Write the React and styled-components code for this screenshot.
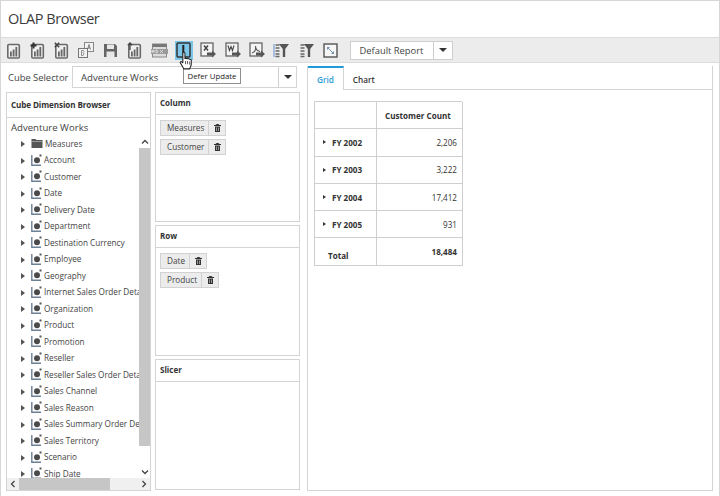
import React from 'react'
import styled, { createGlobalStyle } from 'styled-components'

const GlobalStyle = createGlobalStyle`
    html, body {
        margin: 0;
        padding: 0;
        background: white;
    }
    * {
        box-sizing: border-box;
    }
`

const Page = styled.div`
    position: relative;
    width: 720px;
    height: 496px;
    overflow: hidden;
    background: white;
    border: 1px solid #d6d6d6;
    border-bottom: 0;
    font-family: "Open Sans", "Noto Sans", sans-serif;
    color: #333;
    display: flex;
    flex-direction: column;
`

const TitleBar = styled.div`
    height: 36px;
    padding: 3px 0 0 7px;
    font-size: 14.5px;
    line-height: 30px;
    letter-spacing: -0.45px;
    color: #3c3c3c;
`

const Toolbar = styled.div`
    height: 26px;
    background: #ececec;
    border-top: 1px solid #dcdcdc;
    border-bottom: 1px solid #dcdcdc;
    display: flex;
    align-items: center;
    padding-left: 3px;
`

const ToolButton = styled.div`
    width: 18px;
    height: 19px;
    margin-right: 6.4px;
    display: flex;
    align-items: center;
    justify-content: center;
    background: ${props => (props.$active ? '#7dc6e8' : 'transparent')};
    svg {
        display: block;
    }
`

const ReportCombo = styled.div`
    margin-left: 5px;
    width: 103px;
    height: 19px;
    background: white;
    border: 1px solid #cfcfcf;
    display: flex;
    align-items: center;
    font-size: 9.4px;
    color: #444;
`

const ReportText = styled.div`
    flex: 1;
    padding-left: 8px;
`

const ComboArrowBox = styled.div`
    width: ${props => props.$width}px;
    height: 100%;
    border-left: 1px solid #cfcfcf;
    display: flex;
    align-items: center;
    justify-content: center;
    &:after {
        content: '';
        border-left: 4px solid transparent;
        border-right: 4px solid transparent;
        border-top: 4px solid #333;
    }
`

const Content = styled.div`
    flex: 1;
    display: flex;
    min-height: 0;
    padding: 3px 0 5px 5px;
`

const LeftSide = styled.div`
    width: 295px;
    display: flex;
    flex-direction: column;
`

const CubeRow = styled.div`
    height: 22px;
    display: flex;
    align-items: center;
    margin-bottom: 4px;
`

const CubeLabel = styled.div`
    width: 66px;
    padding-left: 2px;
    font-size: 9.4px;
    color: #444;
    white-space: nowrap;
`

const CubeCombo = styled.div`
    width: 225px;
    height: 22px;
    border: 1px solid #d4d4d4;
    display: flex;
    align-items: center;
    font-size: 9.6px;
    color: #444;
`

const Panels = styled.div`
    flex: 1;
    display: flex;
    min-height: 0;
    gap: 4px;
`

const Panel = styled.div`
    border: 1px solid #d4d4d4;
    display: flex;
    flex-direction: column;
    min-height: 0;
    overflow: hidden;
`

const BrowserPanel = styled(Panel)`
    width: 145px;
`

const AxisColumn = styled.div`
    width: 145px;
    display: flex;
    flex-direction: column;
    gap: 3px;
`

const AxisPanel = styled(Panel)`
    height: ${props => props.$height}px;
`

const PanelHeader = styled.div`
    height: 22px;
    flex-shrink: 0;
    padding-left: 4px;
    border-bottom: 1px solid #d4d4d4;
    font-size: 8px;
    font-weight: 700;
    line-height: 19px;
    color: #333;
    white-space: nowrap;
`

const BrowserHeader = styled(PanelHeader)`
    height: 25px;
    line-height: 23px;
    font-size: 8.1px;
    letter-spacing: -0.1px;
`

const TreeArea = styled.div`
    flex: 1;
    display: flex;
    min-height: 0;
    position: relative;
`

const TreeScroll = styled.div`
    width: 132px;
    overflow: hidden;
    padding: 3px 0 0 4px;
`

const TreeRoot = styled.div`
    font-size: 9.6px;
    line-height: 14px;
    color: #444;
    white-space: nowrap;
`

const TreeRow = styled.div`
    height: 16.5px;
    display: flex;
    align-items: center;
    padding-left: 10px;
    font-size: 8.2px;
    color: #444;
    white-space: nowrap;
    svg {
        flex-shrink: 0;
    }
`

const Expander = styled.span`
    width: 0;
    height: 0;
    margin-right: 6px;
    margin-top: 2px;
    flex-shrink: 0;
    border-top: 3px solid transparent;
    border-bottom: 3px solid transparent;
    border-left: 4px solid #555;
`

const TreeLabel = styled.span`
    margin-left: 2px;
`

const VerticalBar = styled.div`
    width: 11px;
    padding-top: 18px;
    display: flex;
    flex-direction: column;
    background: white;
`

const HorizontalBar = styled.div`
    height: 12px;
    flex-shrink: 0;
    display: flex;
    background: #f0f0f0;
`

const BarArrow = styled.div`
    width: 12px;
    height: 12px;
    flex-shrink: 0;
    display: flex;
    align-items: center;
    justify-content: center;
`

const VerticalThumb = styled.div`
    flex: 1;
    margin-bottom: 20px;
    background: #c6c6c6;
`

const HorizontalThumb = styled.div`
    width: 91px;
    background: #c6c6c6;
`

const HorizontalRest = styled.div`
    flex: 1;
`

const ChipList = styled.div`
    padding: 5px 4px;
    display: flex;
    flex-direction: column;
    gap: 3px;
    align-items: flex-start;
`

const Chip = styled.div`
    height: 16px;
    display: flex;
    background: #ececec;
    border: 1px solid #d2d2d2;
    font-size: 8.2px;
    line-height: 14px;
    color: #444;
`

const ChipName = styled.div`
    padding: 0 4px 0 6px;
    border-right: 1px solid #d2d2d2;
`

const ChipTrash = styled.div`
    width: 16px;
    display: flex;
    align-items: center;
    justify-content: center;
`

const GridPanel = styled.div`
    width: 406px;
    margin-left: 6px;
    border: 1px solid #d4d4d4;
    border-top: 0;
    display: flex;
    flex-direction: column;
`

const TabStrip = styled.div`
    height: 24px;
    flex-shrink: 0;
    display: flex;
    border-bottom: 1px solid #d4d4d4;
`

const Tab = styled.div`
    height: ${props => (props.$active ? '24px' : '23px')};
    padding: 0 9px;
    font-size: 8.2px;
    font-weight: 600;
    line-height: 24px;
    background: white;
    color: ${props => (props.$active ? '#1f9bd7' : '#333')};
    border-top: 2px solid ${props => (props.$active ? '#1f9bd7' : 'transparent')};
    border-right: 1px solid ${props => (props.$active ? '#d4d4d4' : 'transparent')};
`

const PivotTable = styled.div`
    width: 148px;
    margin: 11px 0 0 6px;
    display: grid;
    grid-template-columns: 62px 86px;
    grid-auto-rows: 27.3px;
    border-top: 1px solid #cfcfcf;
    border-left: 1px solid #cfcfcf;
`

const Cell = styled.div`
    border-right: 1px solid #cfcfcf;
    border-bottom: 1px solid #cfcfcf;
    display: flex;
    align-items: center;
    justify-content: ${props => (props.$right ? 'flex-end' : 'flex-start')};
    padding: ${props => (props.$low ? '7px' : '0')} ${props => (props.$right ? '5px' : '0')} 0 ${props => (props.$pad ? '13px' : '8px')};
    font-size: 8.1px;
    font-weight: ${props => (props.$bold ? 700 : 400)};
    color: #333;
    white-space: nowrap;
`

const RowArrow = styled.span`
    margin-right: 6px;
    border-top: 2.5px solid transparent;
    border-bottom: 2.5px solid transparent;
    border-left: 3.5px solid #333;
`

const Tooltip = styled.div`
    position: absolute;
    left: 182px;
    top: 67px;
    width: 58px;
    height: 16px;
    background: white;
    border: 1px solid #8f8f8f;
    font-size: 7.8px;
    line-height: 14px;
    text-align: center;
    color: #222;
    white-space: nowrap;
`

const Pointer = styled.svg`
    position: absolute;
    left: 178px;
    top: 50px;
`

const Bars = ({ extra }) => (
    <svg width="15" height="17" viewBox="0 0 15 17">
        <rect x="1.800" y="2.500" width="11.500" height="13.500" rx="1" fill="#f1f1f1" stroke="#6a6a6a" strokeWidth="1.600" />
        <path d="M4 14.500V9.500h1.800v5zM6.700 14.500V7.500h1.800v7zM9.400 14.500V5h1.800v9.500z" fill="#666" />
        {extra}
    </svg>
)

const Plus = <path d="M3.500 0.500v6M0.500 3.500h6" stroke="#333" strokeWidth="2" />
const Cross = <path d="M0.800 0.800l4.400 4.400M5.200 0.800l-4.400 4.400" stroke="#444" strokeWidth="1.500" />
const Up = <path d="M3 8V1M0.800 3.200L3 1l2.200 2.200" stroke="#444" strokeWidth="1.300" fill="none" />

const SwapIcon = () => (
    <svg width="16" height="16" viewBox="0 0 16 16">
        <rect x="6.500" y="0.500" width="9" height="9" fill="#f3f3f3" stroke="#888" />
        <rect x="0.500" y="6.500" width="9" height="9" fill="#f3f3f3" stroke="#777" />
        <path d="M9.500 7.500L11 2.500l1.500 5M10 6h2" stroke="#666" fill="none" strokeWidth="0.800" />
        <path d="M3.500 13.500V8.500h2q1.500 1-0.500 2.200q2 0.800 0 2.800z" stroke="#777" fill="none" strokeWidth="0.800" />
    </svg>
)

const SaveIcon = () => (
    <svg width="15" height="15" viewBox="0 0 15 15">
        <path d="M1 1h11l2 2v11H1z" fill="#666" />
        <rect x="4" y="1.500" width="7" height="4.500" fill="#e8e8e8" />
        <rect x="3.500" y="8.500" width="8" height="5.500" fill="#e8e8e8" />
    </svg>
)

const MdxIcon = () => (
    <svg width="17" height="15" viewBox="0 0 17 15">
        <rect x="1.500" y="1" width="14" height="13" fill="#dcdcdc" stroke="#888" />
        <rect x="1.500" y="1" width="14" height="3" fill="#777" />
        <rect x="0" y="6" width="17" height="5" fill="#9a9a9a" />
        <path d="M1 10V7l1 2 1-2v3M5 7v3h1l1-1V8L6 7zM9 7l3 3M12 7l-3 3" stroke="#eee" strokeWidth="0.700" fill="none" />
    </svg>
)

const DeferIcon = () => (
    <svg width="15" height="16" viewBox="0 0 15 16">
        <rect x="1" y="1" width="13" height="14" rx="1" fill="#7dc6e8" stroke="#333" strokeWidth="1.500" />
        <rect x="6.300" y="3" width="2" height="10" fill="#222" />
    </svg>
)

const ExportIcon = ({ letter }) => (
    <svg width="16" height="16" viewBox="0 0 16 16">
        <rect x="1" y="1" width="12" height="13" fill="#f4f4f4" stroke="#666" strokeWidth="1.300" />
        {letter === 'X' && <path d="M4 3.500l4 5M8 3.500l-4 5" stroke="#444" strokeWidth="1.500" />}
        {letter === 'W' && <path d="M3 3.500l1.500 5 1.500-4 1.500 4 1.500-5" stroke="#444" strokeWidth="1.100" fill="none" />}
        {letter === 'P' && <path d="M3 11c3-1 4-4 3.500-7c0 3 2 5 4.500 5.500" stroke="#555" strokeWidth="1.100" fill="none" />}
        <path d="M7 10.500h5V8.500l4 3.500-4 3.500v-2H7z" fill="#555" />
    </svg>
)

const FilterIcon = ({ tinted }) => (
    <svg width="16" height="15" viewBox="0 0 16 15">
        {tinted && <rect x="0" y="1" width="2" height="13" fill="#a9bfe0" />}
        <path d="M2.500 2h4M2.500 5h4M2.500 8h4M2.500 11h4M2.500 13.500h4" stroke="#666" strokeWidth="1.300" />
        <path d="M6 1h10l-3.800 5v8h-2.400V6z" fill="#555" />
    </svg>
)

const ExpandIcon = () => (
    <svg width="15" height="15" viewBox="0 0 15 15">
        <rect x="1" y="1" width="13" height="13" fill="#f6f6f6" stroke="#555" strokeWidth="1.400" />
        <path d="M4 4h3L4 7zM11 11H8l3-3z" fill="#7794b5" />
        <path d="M5 5l5 5" stroke="#7794b5" />
    </svg>
)

const CubeIcon = () => (
    <svg width="11" height="12" viewBox="0 0 11 12">
        <path d="M0.800 1v10.200H10" stroke="#6d7f94" strokeWidth="1.400" fill="none" />
        <circle cx="6" cy="6.300" r="3" fill="#4a4a4a" />
        <rect x="8.500" y="0.500" width="2" height="2" fill="#555" />
    </svg>
)

const FolderIcon = () => (
    <svg width="12" height="10" viewBox="0 0 12 10">
        <path d="M0.500 2V1h4l1 1h6v8H0.500z" fill="#555" />
        <rect x="1" y="3" width="10" height="1" fill="#999" />
    </svg>
)

const TrashIcon = () => (
    <svg width="7" height="8" viewBox="0 0 7 8">
        <path d="M0 1.500h7M2.300 1.500V0.500h2.400v1" stroke="#333" fill="none" />
        <path d="M1 2.500h5V8H1z" fill="#333" />
        <path d="M2.500 3.500V7M4.500 3.500V7" stroke="#ddd" strokeWidth="0.600" />
    </svg>
)

const Chevron = ({ points }) => (
    <svg width="8" height="8" viewBox="0 0 8 8">
        <polyline points={points} fill="none" stroke="#444" strokeWidth="1.300" />
    </svg>
)

const dimensions = [
    'Account', 'Customer', 'Date', 'Delivery Date', 'Department', 'Destination Currency',
    'Employee', 'Geography', 'Internet Sales Order Details', 'Organization', 'Product',
    'Promotion', 'Reseller', 'Reseller Sales Order Details', 'Sales Channel', 'Sales Reason',
    'Sales Summary Order Details', 'Sales Territory', 'Scenario', 'Ship Date',
]

const years = [
    ['FY 2002', '2,206'],
    ['FY 2003', '3,222'],
    ['FY 2004', '17,412'],
    ['FY 2005', '931'],
]

const tools = [
    <Bars />,
    <Bars extra={Plus} />,
    <Bars extra={Cross} />,
    <SwapIcon />,
    <SaveIcon />,
    <Bars extra={Up} />,
    <MdxIcon />,
    <DeferIcon />,
    <ExportIcon letter="X" />,
    <ExportIcon letter="W" />,
    <ExportIcon letter="P" />,
    <FilterIcon tinted />,
    <FilterIcon />,
    <ExpandIcon />,
]

const AxisChips = ({ names }) => (
    <ChipList>
        {names.map(name => (
            <Chip key={name}>
                <ChipName>{name}</ChipName>
                <ChipTrash><TrashIcon /></ChipTrash>
            </Chip>
        ))}
    </ChipList>
)

const App = () => {
    return (
        <Page>
            <GlobalStyle />
            <TitleBar>OLAP Browser</TitleBar>
            <Toolbar>
                {tools.map((icon, i) => (
                    <ToolButton key={i} $active={i === 7}>{icon}</ToolButton>
                ))}
                <ReportCombo>
                    <ReportText>Default Report</ReportText>
                    <ComboArrowBox $width={19} />
                </ReportCombo>
            </Toolbar>
            <Content>
                <LeftSide>
                    <CubeRow>
                        <CubeLabel>Cube Selector</CubeLabel>
                        <CubeCombo>
                            <ReportText>Adventure Works</ReportText>
                            <ComboArrowBox $width={18} />
                        </CubeCombo>
                    </CubeRow>
                    <Panels>
                        <BrowserPanel>
                            <BrowserHeader>Cube Dimension Browser</BrowserHeader>
                            <TreeArea>
                                <TreeScroll>
                                    <TreeRoot>Adventure Works</TreeRoot>
                                    <TreeRow>
                                        <Expander />
                                        <FolderIcon />
                                        <TreeLabel>Measures</TreeLabel>
                                    </TreeRow>
                                    {dimensions.map(name => (
                                        <TreeRow key={name}>
                                            <Expander />
                                            <CubeIcon />
                                            <TreeLabel>{name}</TreeLabel>
                                        </TreeRow>
                                    ))}
                                </TreeScroll>
                                <VerticalBar>
                                    <BarArrow><Chevron points="1,5.500 4,2.500 7,5.500" /></BarArrow>
                                    <VerticalThumb />
                                    <BarArrow><Chevron points="1,2.500 4,5.500 7,2.500" /></BarArrow>
                                </VerticalBar>
                            </TreeArea>
                            <HorizontalBar>
                                <BarArrow><Chevron points="5.500,1 2.500,4 5.500,7" /></BarArrow>
                                <HorizontalThumb />
                                <HorizontalRest />
                                <BarArrow><Chevron points="2.500,1 5.500,4 2.500,7" /></BarArrow>
                            </HorizontalBar>
                        </BrowserPanel>
                        <AxisColumn>
                            <AxisPanel $height={130}>
                                <PanelHeader>Column</PanelHeader>
                                <AxisChips names={['Measures', 'Customer']} />
                            </AxisPanel>
                            <AxisPanel $height={131}>
                                <PanelHeader>Row</PanelHeader>
                                <AxisChips names={['Date', 'Product']} />
                            </AxisPanel>
                            <AxisPanel $height={131}>
                                <PanelHeader>Slicer</PanelHeader>
                            </AxisPanel>
                        </AxisColumn>
                    </Panels>
                </LeftSide>
                <GridPanel>
                    <TabStrip>
                        <Tab $active>Grid</Tab>
                        <Tab>Chart</Tab>
                    </TabStrip>
                    <PivotTable>
                        <Cell />
                        <Cell $bold>Customer Count</Cell>
                        {years.map(([year, count]) => (
                            <React.Fragment key={year}>
                                <Cell $bold><RowArrow />{year}</Cell>
                                <Cell $right>{count}</Cell>
                            </React.Fragment>
                        ))}
                        <Cell $bold $pad $low>Total</Cell>
                        <Cell $bold $right>18,484</Cell>
                    </PivotTable>
                </GridPanel>
            </Content>
            <Tooltip>Defer Update</Tooltip>
            <Pointer width="14" height="20" viewBox="0 0 13 19">
                <path d="M3.500 1.500q1.500-1 2 0.500v5q4 0 6 1.500l0 4.500-1.500 4H4.500L1 11q0-1.500 2-0.500l0.500 1z" fill="white" stroke="#222" strokeWidth="1" />
                <path d="M6 9.500v3M8 9.500v3M10 10v3" stroke="#222" strokeWidth="0.700" />
            </Pointer>
        </Page>
    )
}

export default App
